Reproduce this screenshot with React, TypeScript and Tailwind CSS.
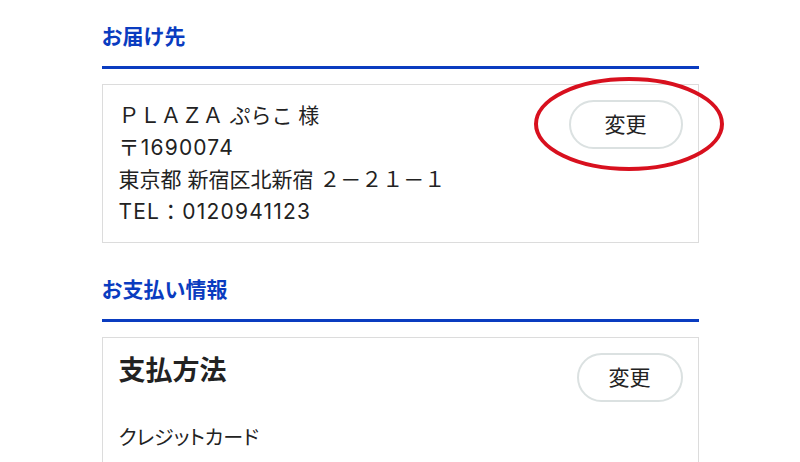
import React from 'react';

const SectionTitle: React.FC<{ label: string }> = ({ label }) => (
  <div className="pt-[24px] pb-[16px] border-b-[3px] border-[#0a3cc0]">
    <h2 className="text-[21px] leading-[26px] font-bold text-[#0a3cc0]">{label}</h2>
  </div>
);

const ChangeButton: React.FC<{ width: string; circled?: boolean }> = ({ width, circled }) => (
  <div className="relative shrink-0">
    <button
      className={`${width} h-[49px] rounded-full border-2 border-[#dbe1e1] bg-white text-[21px] text-[#222]`}
    >
      変更
    </button>
    {circled && (
      <svg
        className="absolute left-[-35px] top-[-23px] overflow-visible pointer-events-none"
        width="190"
        height="94"
        viewBox="0 0 190 94"
      >
        <ellipse cx="95" cy="47" rx="93" ry="45" fill="none" stroke="#d8101e" strokeWidth="4" />
      </svg>
    )}
  </div>
);

export default function App() {
  return (
    <div
      className="min-h-[462px] bg-white text-[#222]"
      style={{ fontFamily: 'Inter, "Noto Sans CJK JP", "Noto Sans", sans-serif' }}
    >
      <div className="mx-auto w-[597px]">
        {/* お届け先 */}
        <SectionTitle label="お届け先" />
        <div className="mt-[15px] border border-[#dcdcdc] pt-[15px] pb-[14px] pl-[16px] pr-[15px] flex justify-between items-start">
          <div className="text-[21px] leading-[32px]">
            <p>ＰＬＡＺＡ ぷらこ 様</p>
            <p className="tracking-[1.2px]">〒1690074</p>
            <p>東京都 新宿区北新宿 ２－２１－１</p>
            <p className="tracking-[1.2px]">TEL：0120941123</p>
          </div>
          <ChangeButton width="w-[114px]" circled />
        </div>

        {/* お支払い情報 */}
        <div className="mt-[10px]">
          <SectionTitle label="お支払い情報" />
        </div>
        <div className="mt-[15px] border border-[#dcdcdc] pt-[15px] pl-[16px] pr-[15px] pb-[20px]">
          <div className="flex justify-between items-start">
            <h3 className="text-[27px] leading-[36px] font-bold">支払方法</h3>
            <ChangeButton width="w-[106px]" />
          </div>
          <p className="mt-[20px] text-[20px] leading-[32px] [font-feature-settings:'palt']">クレジットカード</p>
        </div>
      </div>
    </div>
  );
}
